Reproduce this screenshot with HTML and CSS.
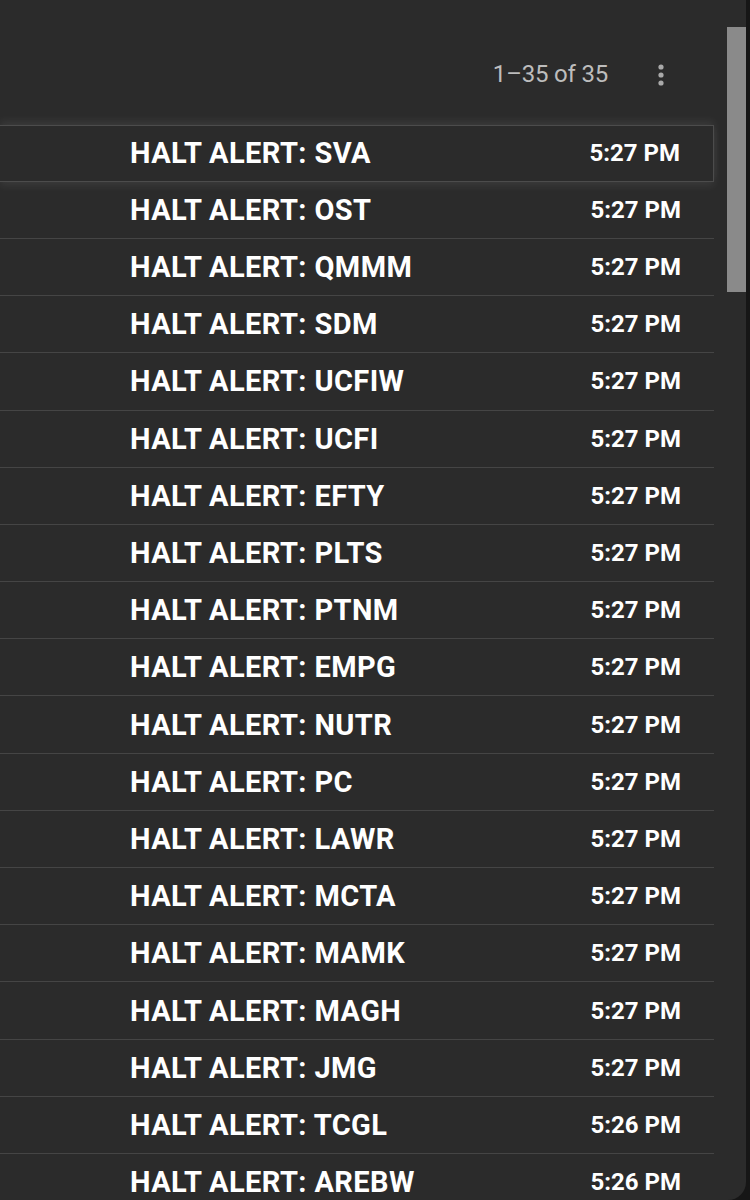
FILE: index.html
```html
<!DOCTYPE html>
<html>
<head>
<meta charset="utf-8">
<link rel="stylesheet" href="styles.css">
</head>
<body>
<div class="app">
  <div class="main">
    <div class="toolbar">
      <span class="count">1–35 of 35</span>
      <span class="more" aria-label="More">
        <svg width="8" height="24" viewBox="0 0 8 24"><circle cx="4" cy="4" r="2.6" fill="#a9a9a9"/><circle cx="4" cy="12" r="2.6" fill="#a9a9a9"/><circle cx="4" cy="20" r="2.6" fill="#a9a9a9"/></svg>
      </span>
    </div>
    <ul class="list">
      <li class="row hover"><span class="subject">HALT ALERT: SVA</span><span class="time">5:27 PM</span></li>
      <li class="row"><span class="subject">HALT ALERT: OST</span><span class="time">5:27 PM</span></li>
      <li class="row"><span class="subject">HALT ALERT: QMMM</span><span class="time">5:27 PM</span></li>
      <li class="row"><span class="subject">HALT ALERT: SDM</span><span class="time">5:27 PM</span></li>
      <li class="row"><span class="subject">HALT ALERT: UCFIW</span><span class="time">5:27 PM</span></li>
      <li class="row"><span class="subject">HALT ALERT: UCFI</span><span class="time">5:27 PM</span></li>
      <li class="row"><span class="subject">HALT ALERT: EFTY</span><span class="time">5:27 PM</span></li>
      <li class="row"><span class="subject">HALT ALERT: PLTS</span><span class="time">5:27 PM</span></li>
      <li class="row"><span class="subject">HALT ALERT: PTNM</span><span class="time">5:27 PM</span></li>
      <li class="row"><span class="subject">HALT ALERT: EMPG</span><span class="time">5:27 PM</span></li>
      <li class="row"><span class="subject">HALT ALERT: NUTR</span><span class="time">5:27 PM</span></li>
      <li class="row"><span class="subject">HALT ALERT: PC</span><span class="time">5:27 PM</span></li>
      <li class="row"><span class="subject">HALT ALERT: LAWR</span><span class="time">5:27 PM</span></li>
      <li class="row"><span class="subject">HALT ALERT: MCTA</span><span class="time">5:27 PM</span></li>
      <li class="row"><span class="subject">HALT ALERT: MAMK</span><span class="time">5:27 PM</span></li>
      <li class="row"><span class="subject">HALT ALERT: MAGH</span><span class="time">5:27 PM</span></li>
      <li class="row"><span class="subject">HALT ALERT: JMG</span><span class="time">5:27 PM</span></li>
      <li class="row"><span class="subject">HALT ALERT: TCGL</span><span class="time">5:26 PM</span></li>
      <li class="row"><span class="subject">HALT ALERT: AREBW</span><span class="time">5:26 PM</span></li>
    </ul>
  </div>
  <div class="scrollbar"><div class="thumb"></div></div>
</div>
</body>
</html>
```
FILE: styles.css
```css
html {
  background: #161616;
  height: 100%;
}
body {
  margin: 0;
  width: 746px;
  height: 1200px;
  overflow: hidden;
  background: #2b2b2b;
  border-bottom-right-radius: 18px;
  font-family: Roboto, "Liberation Sans", sans-serif;
  color: #ffffff;
}
.app {
  display: flex;
  height: 100%;
}
.main {
  width: 714px;
  flex: none;
}
.toolbar {
  height: 124.6px;
  box-sizing: border-box;
  display: flex;
  align-items: flex-start;
  justify-content: flex-end;
  padding-top: 58px;
  padding-right: 49px;
  gap: 49px;
}
.count {
  font-size: 24px;
  color: #bdbdbd;
  line-height: 32px;
  letter-spacing: -0.2px;
}
.more {
  display: flex;
  padding-top: 5px;
}
.list {
  list-style: none;
  margin: 0;
  padding: 0;
}
.row {
  height: 57.2px;
  box-sizing: border-box;
  display: flex;
  align-items: center;
  justify-content: space-between;
  padding: 0 33px 0 130px;
  border-bottom: 1.5px solid #454545;
  font-weight: 700;
}
.row.hover {
  border: 1px solid #4c4c4c;
  border-left: none;
  box-shadow: 0 -4px 8px rgba(255, 255, 255, 0.07), 0 4px 8px rgba(255, 255, 255, 0.07);
  position: relative;
}
.subject {
  font-size: 29px;
  letter-spacing: 0.4px;
}
.time {
  font-size: 24px;
}
.scrollbar {
  width: 32px;
  flex: none;
  padding: 27px 0 0 13px;
  box-sizing: border-box;
}
.thumb {
  width: 19px;
  height: 265px;
  background: #8a8a8a;
}
```
